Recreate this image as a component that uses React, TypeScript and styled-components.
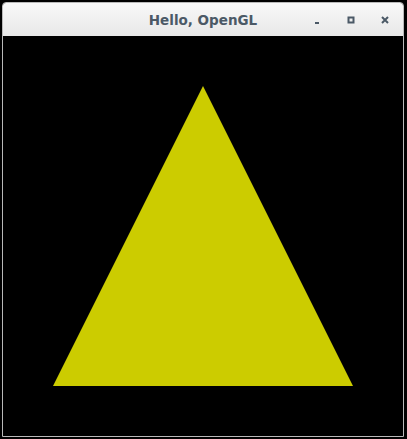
import React from "react";
import styled, { createGlobalStyle } from "styled-components";

const Global = createGlobalStyle`
  html, body { margin: 0; padding: 0; background: #000; }
  body { width: 407px; height: 439px; overflow: hidden; }
`;

const Window = styled.div`
  margin: 2px 0 0 2px;
  width: 400px;
  border: 1px solid #b9b9b9;
  border-radius: 4px 4px 0 0;
  background: #000;
  display: flex;
  flex-direction: column;
  overflow: hidden;
`;

const TitleBar = styled.div`
  height: 33px;
  background: linear-gradient(#f8f8f8, #e8e8e8);
  display: grid;
  grid-template-columns: 1fr auto 1fr;
  align-items: center;
  font-family: "DejaVu Sans", sans-serif;
  font-weight: bold;
  font-size: 13.5px;
  color: #4b5966;
`;

const Title = styled.div`
  grid-column: 2;
  padding-top: 1px;
`;

const Controls = styled.div`
  grid-column: 3;
  justify-self: end;
  display: flex;
  align-items: center;
  padding-right: 1px;
`;

const CtrlButton = styled.div`
  width: 34px;
  height: 33px;
  display: flex;
  align-items: center;
  justify-content: center;
`;

const Canvas = styled.svg`
  display: block;
  width: 400px;
  height: 400px;
  background: #000;
`;

export default function App() {
  return (
    <>
      <Global />
      <Window>
        <TitleBar>
          <Title>Hello, OpenGL</Title>
          <Controls>
            <CtrlButton>
              <svg width="10" height="10" viewBox="0 0 10 10">
                <rect x="3" y="7" width="4" height="2" fill="#4b5966" />
              </svg>
            </CtrlButton>
            <CtrlButton>
              <svg width="10" height="10" viewBox="0 0 10 10">
                <rect x="2.5" y="2.5" width="5" height="5" fill="none" stroke="#4b5966" strokeWidth="2" />
              </svg>
            </CtrlButton>
            <CtrlButton>
              <svg width="10" height="10" viewBox="0 0 10 10">
                <path d="M2 2 L8 8 M8 2 L2 8" stroke="#4b5966" strokeWidth="2" />
              </svg>
            </CtrlButton>
          </Controls>
        </TitleBar>
        <Canvas viewBox="0 0 400 400">
          <polygon points="50,350 350,350 200,50" fill="#cccc00" />
        </Canvas>
      </Window>
    </>
  );
}
